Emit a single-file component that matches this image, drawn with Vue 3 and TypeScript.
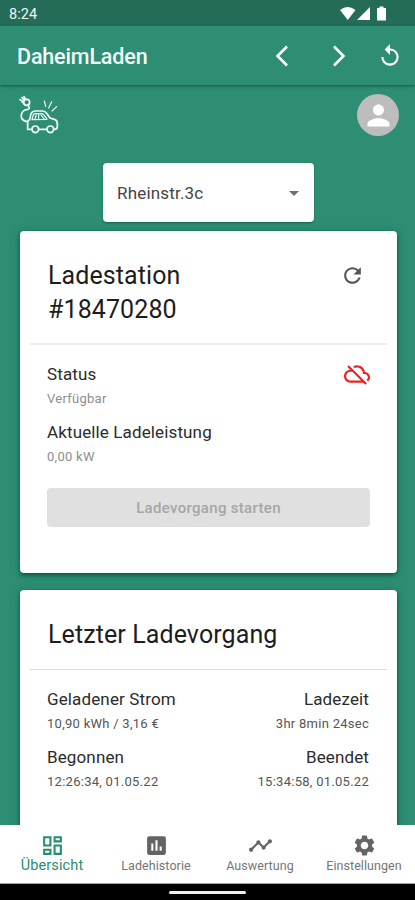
<script setup lang="ts">
interface Metric {
  label: string
  value: string
}

interface Tab {
  id: string
  label: string
  icon: string
  active: boolean
}

const stationMetrics: Metric[] = [
  { label: 'Status', value: 'Verfügbar' },
  { label: 'Aktuelle Ladeleistung', value: '0,00 kW' },
]

const sessionMetrics: Metric[] = [
  { label: 'Geladener Strom', value: '10,90 kWh / 3,16 €' },
  { label: 'Ladezeit', value: '3hr 8min 24sec' },
  { label: 'Begonnen', value: '12:26:34, 01.05.22' },
  { label: 'Beendet', value: '15:34:58, 01.05.22' },
]

const tabs: Tab[] = [
  {
    id: 'overview',
    label: 'Übersicht',
    active: true,
    icon: 'M19 5v2h-4V5h4M9 5v6H5V5h4m10 8v6h-4v-6h4M9 17v2H5v-2h4M21 3h-8v6h8V3zM11 3H3v10h8V3zm10 8h-8v10h8V11zm-10 4H3v6h8v-6z',
  },
  {
    id: 'history',
    label: 'Ladehistorie',
    active: false,
    icon: 'M19 3H5c-1.100 0-2 .9-2 2v14c0 1.100.9 2 2 2h14c1.100 0 2-.9 2-2V5c0-1.100-.9-2-2-2zM9 17H7v-7h2v7zm4 0h-2V7h2v10zm4 0h-2v-4h2v4z',
  },
  {
    id: 'stats',
    label: 'Auswertung',
    active: false,
    icon: 'M23 8c0 1.100-.9 2-2 2-.18 0-.35-.02-.51-.07l-3.560 3.550c.05.16.07.34.07.52 0 1.100-.9 2-2 2s-2-.9-2-2c0-.18.02-.36.07-.52l-2.550-2.550c-.16.05-.34.07-.52.07s-.36-.02-.52-.07l-4.550 4.560c.05.16.07.33.07.51 0 1.100-.9 2-2 2s-2-.9-2-2 .9-2 2-2c.18 0 .35.02.51.07l4.560-4.550C8.020 9.360 8 9.180 8 9c0-1.100.9-2 2-2s2 .9 2 2c0 .18-.02.36-.07.52l2.550 2.550c.16-.05.34-.07.52-.07s.36.02.52.07l3.550-3.560C19.020 8.350 19 8.180 19 8c0-1.100.9-2 2-2s2 .9 2 2z',
  },
  {
    id: 'settings',
    label: 'Einstellungen',
    active: false,
    icon: 'M19.140 12.940c.04-.3.060-.61.060-.94 0-.32-.02-.64-.07-.94l2.030-1.580c.18-.14.23-.41.120-.61l-1.920-3.320c-.12-.22-.37-.29-.59-.22l-2.390.96c-.5-.38-1.030-.7-1.620-.94l-.36-2.540c-.04-.24-.24-.41-.48-.41h-3.840c-.24 0-.43.17-.47.41l-.36 2.540c-.59.24-1.130.57-1.620.94l-2.390-.96c-.22-.08-.47 0-.59.22L2.740 8.870c-.12.21-.08.47.120.61l2.030 1.580c-.05.3-.09.63-.09.94s.02.64.070.94l-2.030 1.580c-.18.14-.23.41-.12.61l1.920 3.320c.12.22.37.29.59.22l2.390-.96c.5.38 1.030.7 1.620.94l.36 2.540c.05.24.24.41.48.41h3.840c.24 0 .44-.17.47-.41l.36-2.540c.59-.24 1.130-.56 1.620-.94l2.390.96c.22.080.47 0 .59-.22l1.920-3.320c.12-.22.07-.47-.12-.61l-2.010-1.580zM12 15.600c-1.980 0-3.600-1.620-3.600-3.600s1.620-3.600 3.600-3.600 3.600 1.620 3.600 3.600-1.620 3.600-3.600 3.600z',
  },
]
</script>

<template>
  <div class="screen">
    <div class="statusbar">
      <span class="clock">8:24</span>
      <svg class="signals" viewBox="0 0 48 16">
        <path d="M0 4 Q7.500 -2 15.500 4 L7.800 14 Z" />
        <path d="M17 14 L30 1 V14 Z" />
        <path d="M37 2 h2.500 V.5 h4 V2 H46 V14.500 H37 Z" />
      </svg>
    </div>

    <header class="appbar">
      <h1 class="brand">DaheimLaden</h1>
      <div class="actions">
        <svg class="chevron" viewBox="0 0 14 22"><path d="M12 1.500 L2.500 11 L12 20.500" /></svg>
        <svg class="chevron" viewBox="0 0 14 22"><path d="M2 1.500 L11.500 11 L2 20.500" /></svg>
        <svg class="replay" viewBox="0 0 24 24">
          <path d="M12 5V1L7 6l5 5V7c3.310 0 6 2.690 6 6s-2.690 6-6 6-6-2.690-6-6H4c0 4.420 3.580 8 8 8s8-3.580 8-8-3.580-8-8-8z" />
        </svg>
      </div>
    </header>

    <main class="content">
      <div class="identity">
        <svg class="logo" viewBox="0 0 120 120">
          <g class="logo-lines">
            <circle cx="23" cy="22" r="9" />
            <path d="M15 15 L9 8 M11 20 L3 14 M19 12 L15 5 M10 22 L19 11" />
            <path d="M28 31 L31 40 M27 43 C4 44 -3 75 25 80" />
            <path d="M38 103 H26 V82 Q26 76 32 74 L36 56 Q39 49 47 48 H70 Q78 48 84 56 L93 69 L108 74 Q115 77 115 86 V95 Q115 103 106 103 M60 103 H83" />
            <path class="thin" d="M39 74 L43 59 Q45 56 50 56 H68 Q75 57 84 73 Z M59 56 V73 M48 72 L52 60 M66 60 L75 71" />
            <circle cx="49" cy="103" r="10" />
            <circle cx="94" cy="103" r="10" />
            <path class="thin" d="M76 18 L80 34 M98 20 L89 39 M113 35 L99 48" />
          </g>
        </svg>
        <div class="avatar">
          <svg viewBox="0 0 24 24">
            <path d="M12 12c2.210 0 4-1.790 4-4s-1.790-4-4-4-4 1.790-4 4 1.790 4 4 4zm0 2c-2.670 0-8 1.340-8 4v2h16v-2c0-2.660-5.330-4-8-4z" />
          </svg>
        </div>
      </div>

      <div class="select">
        <span class="select-value">Rheinstr.3c</span>
        <svg class="caret" viewBox="0 0 10 5"><path d="M0 0h10L5 5z" /></svg>
      </div>

      <section class="card station">
        <div class="card-head">
          <h2 class="card-title">Ladestation<br />#18470280</h2>
          <svg class="refresh" viewBox="0 0 24 24">
            <path d="M17.650 6.350C16.200 4.900 14.210 4 12 4c-4.420 0-7.990 3.580-7.990 8s3.570 8 7.990 8c3.730 0 6.840-2.550 7.730-6h-2.080c-.82 2.330-3.040 4-5.650 4-3.310 0-6-2.690-6-6s2.690-6 6-6c1.660 0 3.140.69 4.220 1.780L13 11h7V4l-2.350 2.350z" />
          </svg>
        </div>
        <div class="card-body">
          <div class="metrics station-metrics">
            <div v-for="m in stationMetrics" :key="m.label" class="metric muted">
              <div class="metric-label">{{ m.label }}</div>
              <div class="metric-value">{{ m.value }}</div>
            </div>
          </div>
          <svg class="cloud-off" viewBox="0 0 24 24">
            <path d="M24 15c0-2.640-2.050-4.780-4.650-4.960C18.670 6.590 15.640 4 12 4c-1.330 0-2.570.36-3.650.97l1.490 1.490C10.510 6.170 11.230 6 12 6c3.040 0 5.500 2.460 5.500 5.500v.5H19c1.660 0 3 1.340 3 3 0 .99-.48 1.850-1.210 2.400l1.410 1.410c1.090-.92 1.800-2.270 1.800-3.810zM4.410 3.860L3 5.270l2.770 2.770h-.42C2.340 8.360 0 10.910 0 14c0 3.310 2.690 6 6 6h11.730l2 2 1.410-1.410L4.410 3.860zM6 18c-2.210 0-4-1.790-4-4s1.790-4 4-4h1.730l8 8H6z" />
          </svg>
        </div>
        <button class="start" disabled>Ladevorgang starten</button>
      </section>

      <section class="card session">
        <div class="card-head">
          <h2 class="card-title">Letzter Ladevorgang</h2>
        </div>
        <div class="metrics session-metrics">
          <div v-for="m in sessionMetrics" :key="m.label" class="metric">
            <div class="metric-label">{{ m.label }}</div>
            <div class="metric-value">{{ m.value }}</div>
          </div>
        </div>
      </section>
    </main>

    <nav class="tabs">
      <div v-for="t in tabs" :key="t.id" class="tab" :class="{ active: t.active }">
        <svg class="tab-icon" viewBox="0 0 24 24"><path :d="t.icon" /></svg>
        <span class="tab-label">{{ t.label }}</span>
      </div>
    </nav>
    <div class="gesture"><div class="pill"></div></div>
  </div>
</template>

<style>
body {
  margin: 0;
  overflow: hidden;
}
</style>

<style scoped>
.screen {
  box-sizing: border-box;
  width: 415px;
  height: 900px;
  display: flex;
  flex-direction: column;
  overflow: hidden;
  background: #2d8e74;
  font-family: Roboto, "Liberation Sans", sans-serif;
  color: #222;
}
.screen svg {
  display: block;
  flex: none;
}
.statusbar {
  flex: none;
  height: 26px;
  display: flex;
  align-items: center;
  justify-content: space-between;
  padding: 2px 27px 0 9px;
  box-sizing: border-box;
  background: #246b58;
  color: #f1f7f5;
}
.clock {
  font-size: 14.500px;
  letter-spacing: 0.1px;
}
.signals {
  width: 48px;
  height: 16px;
  margin-top: -1px;
  fill: #fff;
}
.appbar {
  flex: none;
  height: 59px;
  display: flex;
  align-items: center;
  justify-content: space-between;
  padding: 1px 13px 0 17px;
  box-sizing: border-box;
  box-shadow: 0 1px 3px rgba(0, 50, 35, 0.6);
}
.brand {
  margin: 0;
  font-size: 21.500px;
  font-weight: 500;
  letter-spacing: -0.15px;
  color: #f3fbf8;
}
.actions {
  display: flex;
  align-items: center;
}
.chevron {
  width: 14px;
  height: 22px;
  margin-right: 43px;
  fill: none;
  stroke: #fff;
  stroke-width: 2.600;
}
.chevron + .chevron {
  margin-right: 31px;
}
.replay {
  width: 26px;
  height: 26px;
  margin-right: -1px;
  fill: #fff;
}
.content {
  flex: 1;
  min-height: 0;
  overflow: hidden;
  display: flex;
  flex-direction: column;
  padding: 0 18px 0 20px;
}
.identity {
  height: 79px;
  flex: none;
  display: flex;
  justify-content: space-between;
  align-items: flex-start;
  padding: 9px 0 0;
  box-sizing: border-box;
}
.logo {
  width: 40px;
  height: 40px;
  margin: 1px 0 0 -1px;
}
.logo-lines {
  fill: none;
  stroke: #eefaf6;
  stroke-width: 5.200;
  stroke-linecap: round;
  stroke-linejoin: round;
}
.thin {
  stroke-width: 3.500;
}
.avatar {
  width: 42px;
  height: 42px;
  margin: 0 -2px 0 0;
  border-radius: 50%;
  background: #bdbdbd;
  display: grid;
  place-items: center;
}
.avatar svg {
  width: 33px;
  height: 33px;
  fill: #fff;
}
.select {
  flex: none;
  align-self: flex-start;
  width: 211px;
  height: 59px;
  margin: -1px 0 9px 83px;
  padding: 0 15px 0 14px;
  box-sizing: border-box;
  display: flex;
  align-items: center;
  justify-content: space-between;
  border-radius: 4px;
  background: #fff;
  box-shadow: 0 1px 2px rgba(0, 90, 60, 0.7);
}
.select-value {
  font-size: 17px;
  letter-spacing: 0.18px;
  color: #444;
}
.caret {
  width: 10px;
  height: 5px;
  margin-top: 1px;
  fill: #707070;
}
.card {
  flex: none;
  border-radius: 4px;
  background: #fff;
  box-shadow: 0 2px 4px rgba(0, 85, 60, 0.85), 0 1px 10px rgba(0, 80, 55, 0.3);
  box-sizing: border-box;
  padding: 0 10px;
}
.station {
  height: 342px;
  margin-bottom: 17px;
}
.session {
  height: 290px;
}
.card-head {
  display: flex;
  justify-content: space-between;
  padding: 28px 23px 16px 18px;
  border-bottom: 2px solid #ececec;
}
.session .card-head {
  padding-bottom: 17px;
  border-bottom-width: 1px;
  border-color: #dcdcdc;
}
.card-title {
  margin: 0;
  font-size: 25px;
  font-weight: 400;
  line-height: 34px;
  letter-spacing: 0.1px;
  color: #1d1d1d;
}
.refresh {
  width: 25px;
  height: 25px;
  margin: 4px -1px 0 0;
  fill: #555;
}
.card-body {
  display: flex;
  justify-content: space-between;
  padding: 17px 17px 0;
}
.metrics {
  display: grid;
}
.metric {
  height: 58px;
}
.metric-label {
  font-size: 17px;
  line-height: 24px;
  letter-spacing: 0.13px;
  color: #2b2b2b;
}
.metric-value {
  font-size: 13px;
  line-height: 25px;
  letter-spacing: 0.27px;
  color: #555;
}
.muted .metric-value {
  color: #8e8e8e;
}
.cloud-off {
  width: 26px;
  height: 26px;
  margin-top: -1px;
  fill: #ee2222;
}
.start {
  display: block;
  width: 323px;
  height: 39px;
  margin: 10px 0 0 17px;
  border: 0;
  padding: 0;
  border-radius: 4px;
  background: #e0e0e0;
  color: #a6a6a6;
  font-family: inherit;
  font-size: 15px;
  font-weight: 500;
  letter-spacing: 0.32px;
}
.session-metrics {
  grid-template-columns: auto auto;
  padding: 17px 18px 0 17px;
}
.session-metrics .metric:nth-child(even) {
  text-align: right;
}
.tabs {
  flex: none;
  height: 59px;
  display: grid;
  grid-template-columns: repeat(4, 104px);
  background: #fff;
  border-bottom: 1px solid #a5a5a5;
  box-sizing: border-box;
  overflow: hidden;
}
.tab {
  display: flex;
  flex-direction: column;
  align-items: center;
  padding-top: 8px;
  color: #757575;
  fill: #646464;
}
.tab-icon {
  width: 25px;
  height: 25px;
}
.tab-label {
  font-size: 12.500px;
  line-height: 16px;
  letter-spacing: 0.07px;
  white-space: nowrap;
}
.tab.active {
  color: #2a8d72;
  fill: #2a8d72;
}
.tab.active .tab-label {
  font-size: 14.500px;
  letter-spacing: 0.12px;
}
.gesture {
  flex: none;
  height: 16px;
  display: flex;
  justify-content: center;
  align-items: center;
  background: #000;
}
.pill {
  width: 77px;
  height: 3px;
  margin-top: 1px;
  border-radius: 2px;
  background: #f2f2f2;
}
</style>
